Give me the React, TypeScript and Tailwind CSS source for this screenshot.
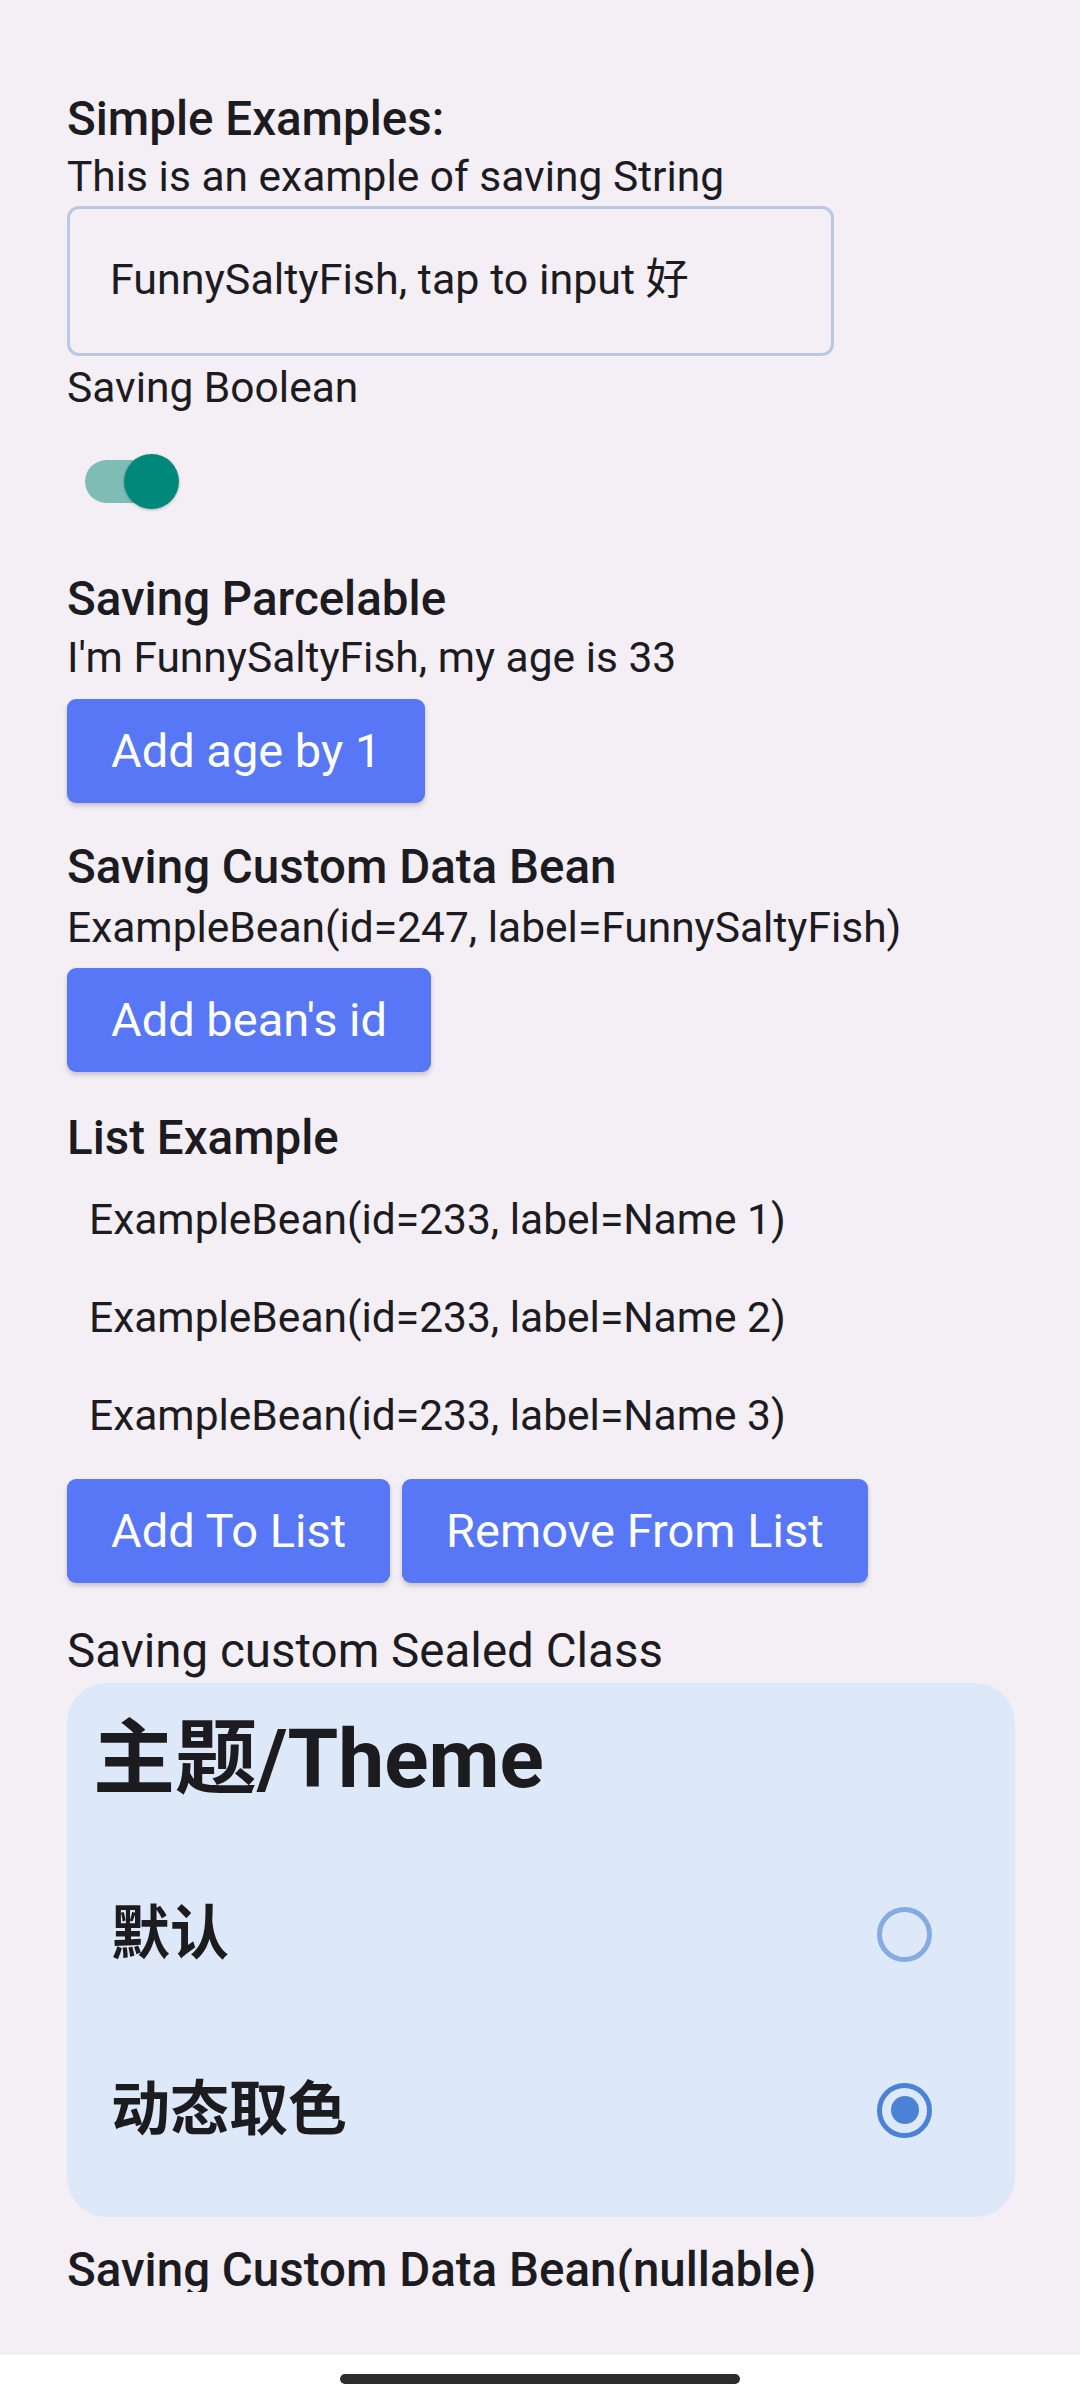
import React, { useState } from 'react';

const FONT = { fontFamily: 'Roboto, "Noto Sans CJK SC", sans-serif' };

const Heading: React.FC<{ text: string; className?: string; weight?: string }> = ({ text, className = '', weight = 'font-medium' }) => (
  <div className={`h-[56px] flex items-center text-[47.5px] text-[#1c1b1f] whitespace-nowrap ${weight} ${className}`}>{text}</div>
);

const Body: React.FC<{ text: string; className?: string }> = ({ text, className = '' }) => (
  <div className={`flex items-center text-[42.5px] text-[#1c1b1f] whitespace-nowrap ${className}`}>{text}</div>
);

const PrimaryButton: React.FC<{ label: string; className?: string }> = ({ label, className = '' }) => (
  <button className={`h-[104px] px-[44px] rounded-[9px] bg-[#5877f6] text-white text-[47px] whitespace-nowrap shadow-[0_3px_5px_rgba(0,0,0,0.18)] ${className}`}>
    {label}
  </button>
);

const Radio: React.FC<{ checked: boolean }> = ({ checked }) => (
  <div
    className={`w-[55px] h-[55px] rounded-full border-[5px] flex items-center justify-center ${
      checked ? 'border-[#4a83d6]' : 'border-[#86aae2]'
    }`}
  >
    {checked && <div className="w-[28px] h-[28px] rounded-full bg-[#4a83d6]" />}
  </div>
);

export default function App() {
  const [theme, setTheme] = useState<'default' | 'dynamic'>('dynamic');
  const list = ['Name 1', 'Name 2', 'Name 3'];

  return (
    <div className="w-[1080px] h-[2400px] bg-white flex flex-col" style={FONT}>
      <div className="h-[2355px] shrink-0 bg-[#f4eef5]">
        {/* content column, clipped at the bottom like the scrolled list */}
        <div className="h-[2292px] overflow-hidden pl-[67px] flex flex-col *:shrink-0">
          <Heading text="Simple Examples:" className="mt-[92px]" />
          <Body text="This is an example of saving String" className="h-[58px]" />
          <div className="w-[767px] h-[150px] rounded-[12px] border-[3px] border-[#b9c9e2] flex items-center pl-[40px] pb-[4px] text-[43px] text-[#1c1b1f]">
            FunnySaltyFish, tap to input 好
          </div>
          <Body text="Saving Boolean" className="h-[64px]" />
          <div className="h-[122px] flex items-center">
            <div className="relative w-[95px] h-[55px] ml-[18px]">
              <div className="absolute left-0 top-[6px] w-[80px] h-[43px] rounded-full bg-[#7fbcb6]" />
              <div className="absolute left-[39px] top-0 w-[55px] h-[55px] rounded-full bg-[#00897b] shadow-[0_1px_3px_rgba(0,0,0,0.25)]" />
            </div>
          </div>
          <Heading text="Saving Parcelable" className="mt-[30px]" />
          <Body text="I'm FunnySaltyFish, my age is 33" className="h-[60px]" />
          <div className="mt-[11px] flex">
            <PrimaryButton label="Add age by 1" />
          </div>
          <Heading text="Saving Custom Data Bean" className="mt-[37px]" />
          <Body text="ExampleBean(id=247, label=FunnySaltyFish)" className="h-[64px]" />
          <div className="mt-[8px] flex">
            <PrimaryButton label="Add bean's id" />
          </div>
          <Heading text="List Example" className="mt-[39px]" />
          <div className="mt-[4px] flex flex-col">
            {list.map((name) => (
              <Body key={name} text={`ExampleBean(id=233, label=${name})`} className="h-[98px] pl-[22px]" />
            ))}
          </div>
          <div className="mt-[14px] flex gap-[12px]">
            <PrimaryButton label="Add To List" className="h-[101px]" />
            <PrimaryButton label="Remove From List" className="h-[101px]" />
          </div>
          <Heading text="Saving custom Sealed Class" weight="font-normal" className="mt-[41px]" />
          <div className="mt-[3px] w-[948px] h-[534px] rounded-[40px] bg-[#dde8f8] flex flex-col">
            <div className="h-[163px] flex items-center pl-[26px] pb-[11px] text-[82px] font-bold text-[#1c1b1f]">主题/Theme</div>
            {[
              { key: 'default' as const, label: '默认' },
              { key: 'dynamic' as const, label: '动态取色' },
            ].map((opt) => (
              <div
                key={opt.key}
                onClick={() => setTheme(opt.key)}
                className="h-[176px] flex items-center justify-between pl-[44px] pr-[83px]"
              >
                <span className="text-[59px] font-bold text-[#1c1b1f]">{opt.label}</span>
                <Radio checked={theme === opt.key} />
              </div>
            ))}
          </div>
          <Heading text="Saving Custom Data Bean(nullable)" className="mt-[26px]" />
        </div>
      </div>
      <div className="flex-1 flex items-start justify-center pt-[19px]">
        <div className="w-[400px] h-[10px] rounded-full bg-[#2d2d2d]" />
      </div>
    </div>
  );
}
